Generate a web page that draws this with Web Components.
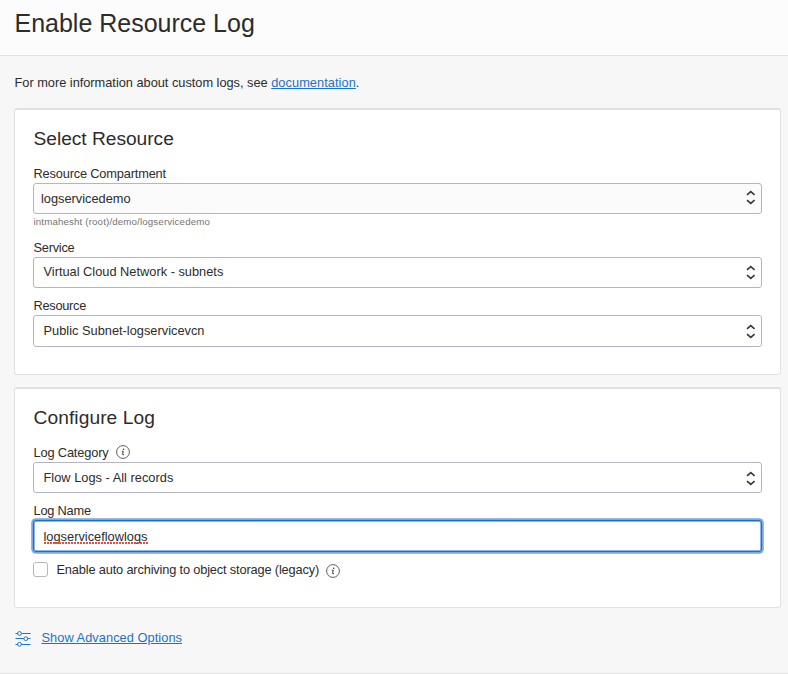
<!DOCTYPE html>
<html lang="en"><head><meta charset="utf-8"><title>Enable Resource Log</title>
<style>
html,body{margin:0;height:100%;background:#f7f7f7}
body{font:12.8px/16px "Liberation Sans",Arial,sans-serif;color:#2d2c2b;overflow:hidden}
</style></head><body>
<log-page></log-page>
<script>
const define=(name,html,setup)=>customElements.define(name,class extends HTMLElement{
  connectedCallback(){
    if(this.shadowRoot)return;
    const root=this.attachShadow({mode:'open'});
    const t=document.createElement('template');t.innerHTML=html;
    root.append(t.content.cloneNode(true));
    if(setup)setup(this,root);
  }
});

/* Text tracked so that its advance equals the w attribute */
define('tracked-text',`<style>:host{display:inline;white-space:nowrap;margin-left:.5px}</style><slot></slot>`,el=>{
  const w=+el.getAttribute('w'),n=el.textContent.length;
  const now=el.getBoundingClientRect().width;
  if(w&&now)el.style.letterSpacing=((w-now)/n).toFixed(4)+'px';
});

define('info-icon',`<style>:host{display:block;width:14px;height:14px}svg{display:block}</style>
<svg width="14" height="14" viewBox="0 0 14 14"><circle cx="7" cy="7" r="6.4" fill="none" stroke="#555" stroke-width=".95"/><circle cx="7.6" cy="4.2" r=".8" fill="#333"/><path d="M5.8 6.3H7.3L6.5 9.3Q6.4 10.2 8 9.5" fill="none" stroke="#333" stroke-width=".95"/></svg>`);

define('field-label',`<style>:host{display:flex;height:16px;margin-bottom:1px;gap:7px}::slotted(info-icon){margin-top:0}</style><slot></slot>`);

define('select-box',`<style>
:host{display:flex;box-sizing:border-box;height:var(--box-h,31px);border:1px solid #b3b6c2;border-radius:3px;background:var(--bg,#fff);padding:0 6px 0 var(--pl,9px);justify-content:space-between}
div{padding-top:var(--pt,6px)}
svg{display:block;margin-top:var(--ct,7px)}
</style><div><slot></slot></div><svg width="9" height="15" viewBox="0 0 9 15"><path d="M1 4.9L4.8 1.7L8.6 4.9M1 10.1L4.8 13.3L8.6 10.1" fill="none" stroke="#3a3836" stroke-width="1.7"/></svg>`);

define('text-input',`<style>
:host{display:block;box-sizing:border-box;height:32px;border:1px solid #1a6fca;border-radius:3px;background:#fff;padding:8px 9px 0;box-shadow:0 0 0 1.8px #79a8e4,inset 0 0 0 .5px #1a6fca}
span{position:relative;display:inline-block}
svg{position:absolute;left:.6px;bottom:1px;width:104px;height:2px}
</style><span><slot></slot><svg viewBox="0 0 104 2"><path d="M0 1H104" stroke="#f5453d" stroke-width="2" stroke-dasharray="2 1"/></svg></span>`);

define('check-row',`<style>
:host{display:flex;margin-top:10px;height:16px}
i{box-sizing:border-box;width:15px;height:15px;border:1px solid #b3b6c2;border-radius:3px;background:#fff;margin-right:8px}
::slotted(info-icon){margin:2px 0 0 7px}
</style><i></i><slot></slot>`);

define('form-panel',`<style>
:host{display:block;box-sizing:border-box;border:1px solid #e1e1e5;border-top-width:2px;border-radius:3px;background:#fff;padding:18px 18px 0;height:var(--panel-h)}
h2{margin:0 0 16px;font:400 19.2px/22px "Liberation Sans",Arial,sans-serif}
</style><h2><slot name="title"></slot></h2><slot></slot>`);

define('options-link',`<style>
:host{display:flex;gap:11px;margin-top:22px;color:#1b76cd}
svg{display:block;margin:1px 0 0 .5px}
</style><svg width="16" height="16" viewBox="0 0 16 16" fill="none" stroke="currentColor" stroke-width="1"><path d="M.5 2.5H3M6.5 2.5H15.5M.5 7.5H9M12.8 7.5H15.5M.5 13.5H3M6.5 13.5H15.5"/><circle cx="4.5" cy="2.5" r="1.9"/><circle cx="10.8" cy="7.7" r="1.9"/><circle cx="4.5" cy="13.3" r="1.9"/></svg><slot></slot>`);

define('log-page',`<style>
:host{display:flex;flex-direction:column;box-sizing:border-box;height:674px;border-bottom:1px solid #e2e2e2}
header{box-sizing:border-box;height:56px;background:#fcfcfc;border-bottom:1px solid #e3e3e3;padding:9px 14px 0}
h1{margin:0;font:400 25px/28px "Liberation Sans",Arial,sans-serif}
main{padding:19px 7px 0 14px}
p{margin:0 0 17px;height:16px;white-space:nowrap}
a{color:#1a72cf;text-decoration:underline;text-underline-offset:1px;text-decoration-thickness:1px}
a tracked-text{margin-left:0}
form-panel+form-panel{margin-top:12px}
.hint{display:block;font-size:9.7px;line-height:12px;height:12px;color:#757371;margin:2px 0 12px}
.gap{margin-bottom:10px}
</style>
<header><h1><tracked-text w="240.3">Enable Resource Log</tracked-text></h1></header>
<main>
<p><tracked-text w="256.7">For more information about custom logs, see&nbsp;</tracked-text><a href="#"><tracked-text w="84.6">documentation</tracked-text></a>.</p>
<form-panel style="--panel-h:267px"><tracked-text slot="title" w="140.3">Select Resource</tracked-text>
<field-label><tracked-text w="132.4">Resource Compartment</tracked-text></field-label>
<select-box style="--bg:#fbfbfb;--pl:6.5px;--pt:7px;--ct:6px"><tracked-text w="89.5">logservicedemo</tracked-text></select-box>
<div class="hint"><tracked-text w="176.5">intmahesht (root)/demo/logservicedemo</tracked-text></div>
<field-label><tracked-text w="41">Service</tracked-text></field-label>
<select-box class="gap"><tracked-text w="179.8">Virtual Cloud Network - subnets</tracked-text></select-box>
<field-label><tracked-text w="52.5">Resource</tracked-text></field-label>
<select-box style="--box-h:32px;--pt:7px;--ct:8px"><tracked-text w="161">Public Subnet-logservicevcn</tracked-text></select-box>
</form-panel>
<form-panel style="--panel-h:221px"><tracked-text slot="title" w="121.5">Configure Log</tracked-text>
<field-label><tracked-text w="75">Log Category</tracked-text><info-icon></info-icon></field-label>
<select-box class="gap" style="--pt:7px;--ct:8px"><tracked-text w="129.8">Flow Logs - All records</tracked-text></select-box>
<field-label><tracked-text w="57.3">Log Name</tracked-text></field-label>
<text-input><tracked-text w="104">logserviceflowlogs</tracked-text></text-input>
<check-row><tracked-text w="262.5">Enable auto archiving to object storage (legacy)</tracked-text><info-icon></info-icon></check-row>
</form-panel>
<options-link><a href="#"><tracked-text w="140.5">Show Advanced Options</tracked-text></a></options-link>
</main>`);
</script></body></html>
